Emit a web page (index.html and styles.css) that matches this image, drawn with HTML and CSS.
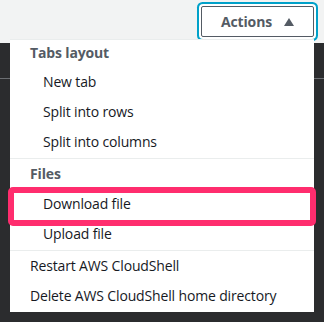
FILE: index.html
```html
<!DOCTYPE html>
<html>
<head>
<meta charset="utf-8">
<link rel="stylesheet" href="styles.css">
</head>
<body>
<div class="page">
  <header class="topbar">
    <button class="actions-btn">
      <span>Actions</span>
      <svg class="caret" width="10" height="8" viewBox="0 0 10 8"><path d="M5 0 L10 8 L0 8 Z" fill="#545b64"/></svg>
    </button>
  </header>
  <div class="dark">
    <div class="dark-line"></div>
  </div>
  <div class="menu">
    <div class="group-title first">Tabs layout</div>
    <div class="item sub">New tab</div>
    <div class="item sub">Split into rows</div>
    <div class="item sub">Split into columns</div>
    <div class="sep"></div>
    <div class="group-title">Files</div>
    <div class="item sub">Download file</div>
    <div class="item sub">Upload file</div>
    <div class="sep"></div>
    <div class="item">Restart AWS CloudShell</div>
    <div class="item">Delete AWS CloudShell home directory</div>
  </div>
  <div class="highlight"></div>
</div>
</body>
</html>
```

FILE: styles.css
```css
* { box-sizing: border-box; }
html, body { margin: 0; padding: 0; }
body {
  width: 324px;
  height: 322px;
  overflow: hidden;
  font-family: "Open Sans", "Noto Sans", sans-serif;
  font-size: 14px;
  letter-spacing: -0.15px;
  background: #2b2c2e;
}
.page {
  position: relative;
  width: 324px;
  height: 322px;
}
.topbar {
  height: 43px;
  background: #f2f3f3;
  display: flex;
  justify-content: flex-end;
  align-items: flex-start;
  padding: 6px 10px 0 0;
}
.actions-btn {
  width: 113px;
  height: 31px;
  border: 1px solid #545b64;
  border-radius: 2px;
  background: #fff;
  color: #545b64;
  font-family: inherit;
  font-size: 14px;
  font-weight: 700;
  letter-spacing: inherit;
  display: flex;
  align-items: center;
  justify-content: center;
  gap: 12px;
  padding: 0;
  box-shadow: 0 0 0 2px #fff, 0 0 0 4px #00a1c9;
}
.caret { display: block; }
.dark {
  height: 279px;
  background: #2b2c2e;
  padding-top: 35px;
}
.dark-line {
  height: 1px;
  background: #6b6e72;
}
.menu {
  position: absolute;
  left: 10px;
  top: 39px;
  width: 304px;
  height: 273px;
  background: #fff;
  border-top: 1px solid #eaeded;
  display: flex;
  flex-direction: column;
}
.group-title {
  height: 30px;
  line-height: 30px;
  padding-left: 20px;
  font-weight: 700;
  color: #545b64;
}
.group-title.first {
  height: 27px;
  line-height: 26px;
}
.item {
  height: 30px;
  line-height: 30px;
  padding-left: 20px;
  color: #16191f;
  white-space: nowrap;
}
.item.sub { padding-left: 33px; }
.sep {
  height: 1px;
  background: #eaeded;
  margin: 1px 0 0;
}
.highlight {
  position: absolute;
  left: 8px;
  top: 187px;
  width: 308px;
  height: 39px;
  border: 6px solid #ff2d6e;
  border-radius: 5px;
}
```
